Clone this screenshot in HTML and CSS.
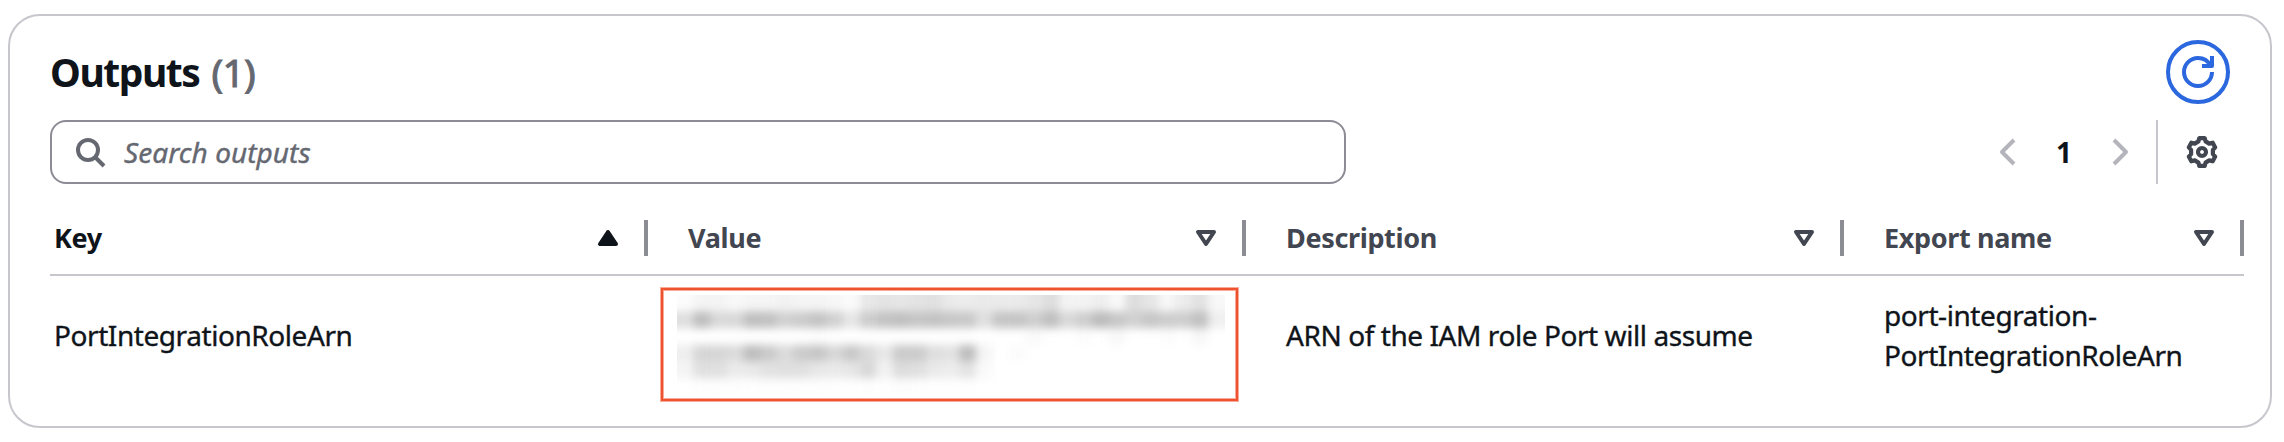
FILE: index.html
```html
<!DOCTYPE html>
<html lang="en">
<head>
<meta charset="utf-8">
<title>Outputs</title>
<link rel="stylesheet" href="styles.css">
</head>
<body>
<section class="card">
  <header class="card-header">
    <h2 class="title"><span class="title-text">Outputs</span><span class="count">(1)</span></h2>
    <button class="refresh" aria-label="Refresh">
      <svg width="32" height="32" viewBox="0 0 16 16" fill="none" stroke="currentColor" stroke-width="2"><path d="M15 8c0 3.87-3.13 7-7 7s-7-3.13-7-7 3.13-7 7-7c2.79 0 5.2 1.63 6.33 4"/><path d="M10 5h5V0" stroke-linejoin="round"/></svg>
    </button>
  </header>
  <div class="tools">
    <div class="search">
      <svg width="32" height="32" viewBox="0 0 16 16" fill="none" stroke="currentColor" stroke-width="2"><circle cx="7" cy="7" r="5"/><path d="m15 15-4.5-4.5"/></svg>
      <span class="placeholder">Search outputs</span>
    </div>
    <div class="controls">
      <svg class="chev" width="32" height="32" viewBox="0 0 16 16" fill="none" stroke="currentColor" stroke-width="2" stroke-linejoin="round"><path d="M11 2 5 8l6 6"/></svg>
      <span class="page">1</span>
      <svg class="chev" width="32" height="32" viewBox="0 0 16 16" fill="none" stroke="currentColor" stroke-width="2" stroke-linejoin="round"><path d="m5 2 6 6-6 6"/></svg>
      <span class="divider"></span>
      <svg class="gear" width="32" height="32" viewBox="-8 -8 16 16" fill="none" stroke="currentColor" stroke-width="2.1" stroke-linejoin="round"><path d="M-1.35-6.95H1.35L1.8-5.3 3.6-4.2 5.34-4.65 6.6-2.3 5.45-1.05V1.05L6.6 2.3 5.34 4.65 3.6 4.2 1.8 5.3 1.35 6.95H-1.35L-1.8 5.3-3.6 4.2-5.34 4.65-6.6 2.3-5.45 1.05V-1.05L-6.6-2.3-5.34-4.65-3.6-4.2-1.8-5.3Z"/><circle r="2"/></svg>
    </div>
  </div>
  <div class="table">
    <div class="th sorted"><span class="label">Key</span><svg width="32" height="32" viewBox="0 0 16 16" fill="currentColor" stroke="currentColor" stroke-width="2" stroke-linejoin="round"><path d="M4 11h8L8 5z"/></svg></div>
    <div class="th"><span class="label">Value</span><svg width="32" height="32" viewBox="0 0 16 16" fill="none" stroke="currentColor" stroke-width="2" stroke-linejoin="round"><path d="M4 5h8l-4 6z"/></svg></div>
    <div class="th"><span class="label">Description</span><svg width="32" height="32" viewBox="0 0 16 16" fill="none" stroke="currentColor" stroke-width="2" stroke-linejoin="round"><path d="M4 5h8l-4 6z"/></svg></div>
    <div class="th"><span class="label">Export name</span><svg width="32" height="32" viewBox="0 0 16 16" fill="none" stroke="currentColor" stroke-width="2" stroke-linejoin="round"><path d="M4 5h8l-4 6z"/></svg></div>
    <div class="td first">PortIntegrationRoleArn</div>
    <div class="td value"><div class="highlight">
      <svg class="redacted" width="548" height="100" viewBox="0 0 548 100"><defs><filter id="soft" filterUnits="userSpaceOnUse" x="-20" y="-20" width="590" height="140" color-interpolation-filters="sRGB"><feGaussianBlur stdDeviation="4"/></filter></defs><g id="mosaic" filter="url(#soft)"></g></svg>
    </div></div>
    <div class="td">ARN of the IAM role Port will assume</div>
    <div class="td">port-integration-<br>PortIntegrationRoleArn</div>
  </div>
</section>
<script src="mosaic.js"></script>
</body>
</html>
```
FILE: mosaic.js
```js
// Grey levels of the redaction mosaic, one hex pair per cell.
const rows = [
  "fc f4 f4 f8 f5 f5 f2 f5 f5 f7 fb e8 e4 e6 e3 e1 eb ec ea eb eb e6 dd f3 f3 ee f9 dd e6 f7 ec e2 f8",
  "de bd d8 d8 bf c1 d0 ca c3 d0 e6 cc c2 bf c5 c2 c6 c8 df c4 c4 ce bf d8 cd bb c6 d0 c6 cc cd c0 ef",
  "ff ff ff ff ff ff ff ff fd ff ff ff ff ff ff ff ff ff ff ff ff f9 ff ff fc ff f8 ff ff fc ff f7 ff",
  "ee d5 d6 db bd ca db cb c6 d7 c8 da e8 ca cb de e2 bd f4 ff fb ff ff ff ff ff ff ff ff ff ff ff ff",
  "f4 df e0 eb e9 e2 df e0 e8 ea e6 d8 f2 dc df ea ed e3 fa ff ff ff ff ff ff ff ff ff ff ff ff ff ff",
  "ff fd fd fd fe fd fd fd fd fe fe fd fe fc fd fe fe fe ff ff ff ff ff ff ff ff ff ff ff ff ff ff ff"
];
const mosaic = document.getElementById("mosaic");
const size = 548 / 33;
rows.forEach((row, r) => {
  row.split(" ").forEach((v, c, all) => {
    const rect = document.createElementNS("http://www.w3.org/2000/svg", "rect");
    const left = c === 0 ? -20 : c * size;
    const right = c === all.length - 1 ? 570 : (c + 1) * size + 0.3;
    const top = r === 0 ? -20 : r * size;
    rect.setAttribute("x", left);
    rect.setAttribute("y", top);
    rect.setAttribute("width", right - left);
    rect.setAttribute("height", (r + 1) * size + 0.3 - top);
    rect.setAttribute("fill", "#" + v + v + v);
    mosaic.appendChild(rect);
  });
});
```
FILE: styles.css
```css
* { box-sizing: border-box; }
body { margin: 0; background: #fff; font-family: "Noto Sans", "Open Sans", sans-serif; color: #0f141a; }
svg { display: block; flex: none; }
.card { margin: 14px 0 0 8px; width: 2264px; height: 414px; border: 2px solid #c6c6cd; border-radius: 32px; padding: 24px 26px 0 40px; }
.card-header { display: flex; align-items: center; justify-content: space-between; height: 64px; padding-right: 14px; }
.title { margin: 0; display: flex; gap: 12px; font-size: 39px; line-height: 48px; font-weight: 700; }
.title-text { letter-spacing: -1.45px; }
.count { color: #656871; font-weight: 400; letter-spacing: -0.8px; -webkit-text-stroke: 1px #656871; }
.refresh { width: 64px; height: 64px; padding: 0; border: 4px solid #2b67de; border-radius: 50%; background: #fff; color: #2b67de; display: grid; place-items: center; }
.tools { display: flex; justify-content: space-between; margin-top: 16px; height: 64px; }
.search { width: 1296px; border: 2px solid #8c8c94; border-radius: 16px; display: flex; align-items: center; padding-left: 22px; gap: 18px; color: #656871; }
.placeholder { font-size: 28px; font-style: italic; letter-spacing: 0.05px; -webkit-text-stroke: 0.4px #656871; }
.controls { display: flex; align-items: center; padding-right: 26px; }
.chev { color: #b4b4bb; }
.page { width: 80px; text-align: center; font-size: 28px; font-weight: 700; }
.divider { width: 2px; height: 64px; background: #c6c6cd; margin: 0 28px 0 20px; }
.gear { color: #424650; }
.table { display: grid; grid-template-columns: 598px 598px 598px 400px; grid-template-rows: 92px 118px; }
.th { display: flex; align-items: center; justify-content: space-between; height: 92px; border-bottom: 2px solid #c6c6cd; padding: 36px 0 18px 40px; color: #424650; font-size: 27px; line-height: 34px; font-weight: 700; letter-spacing: -0.35px; }
.th::after { content: ""; width: 4px; height: 36px; background: #8c8c94; margin-left: 20px; }
.th svg { margin-left: auto; }
.label { padding-bottom: 1px; }
.sorted { color: #0f141a; padding-left: 4px; }
.td { padding-left: 40px; display: flex; align-items: center; font-size: 28px; line-height: 40px; letter-spacing: -0.43px; -webkit-text-stroke: 0.35px #0f141a; }
.first { padding-left: 4px; }
.value { padding: 11px 0 0 12px; align-items: flex-start; }
.highlight { width: 579px; height: 115px; border: 1px solid #f9ab99; outline: 2px solid #ee522e; outline-offset: -3px; box-shadow: inset 0 0 0 3px #f9ab99; padding: 7px 0 0 16px; }
.redacted { overflow: hidden; }
```
